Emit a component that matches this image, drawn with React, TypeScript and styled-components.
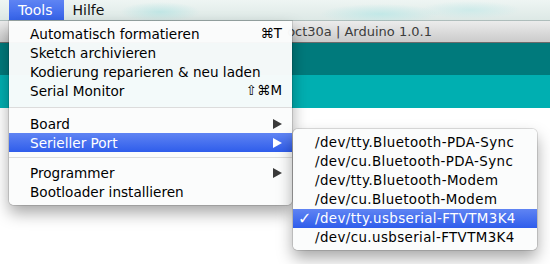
import React from "react";
import styled, { createGlobalStyle } from "styled-components";

const Global = createGlobalStyle`
  html, body { margin: 0; padding: 0; background: #fff; }
  body { font-family: "DejaVu Sans", "Liberation Sans", sans-serif; }
`;

const Screen = styled.div`
  position: relative;
  width: 550px;
  height: 264px;
  overflow: hidden;
  display: flex;
  flex-direction: column;
  background: #fff;
  font-family: "DejaVu Sans", "Liberation Sans", sans-serif;
`;

const MenuBar = styled.div`
  height: 21px;
  flex: none;
  display: flex;
  align-items: stretch;
  padding-left: 9px;
  background:
    radial-gradient(ellipse 40px 10px at 160px 12px, rgba(170, 225, 225, 0.6), transparent),
    radial-gradient(ellipse 60px 10px at 380px 14px, rgba(180, 230, 230, 0.7), transparent),
    radial-gradient(ellipse 50px 9px at 470px 10px, rgba(190, 232, 232, 0.6), transparent),
    linear-gradient(#eef5f3, #dce8e5);
  box-shadow: inset 0 -1px 0 rgba(90, 110, 110, 0.35);
`;

const MenuTitle = styled.div<{ $active?: boolean }>`
  display: flex;
  align-items: center;
  padding: 0 11px 0 9px;
  font-size: 14px;
  color: ${(p) => (p.$active ? "#fff" : "#111")};
  background: ${(p) =>
    p.$active ? "linear-gradient(#5f84f3, #3563ea)" : "transparent"};
  height: 20px;
`;

const Window = styled.div`
  flex: 1;
  display: flex;
  flex-direction: column;
`;

const TitleBar = styled.div`
  height: 21px;
  flex: none;
  display: flex;
  align-items: center;
  justify-content: flex-end;
  padding-right: 118px;
  font-size: 13px;
  color: #3c3c3c;
  background: linear-gradient(#ececec, #cbcbcb);
  border-bottom: 1px solid #6b6b6b;
`;

const Toolbar = styled.div`
  height: 32px;
  flex: none;
  background: #007a7c;
`;

const TabBar = styled.div`
  height: 33px;
  flex: none;
  background: #00afb1;
`;

const Editor = styled.div`
  flex: 1;
  background: #fff;
`;

const Dropdown = styled.div`
  position: absolute;
  left: 9px;
  top: 21px;
  width: 283px;
  padding: 3px 0 4px;
  background: rgba(251, 252, 252, 0.97);
  border-radius: 0 0 5px 5px;
  box-shadow: 0 0 0 1px rgba(0, 0, 0, 0.12), 0 8px 16px rgba(0, 0, 0, 0.35);
  display: flex;
  flex-direction: column;
  z-index: 2;
`;

const SubMenu = styled(Dropdown)`
  left: 293px;
  top: 129px;
  width: 244px;
  padding: 4px 0 3px;
  border-radius: 5px;
  z-index: 3;
`;

const Item = styled.div<{ $active?: boolean }>`
  height: 19px;
  display: flex;
  align-items: center;
  padding: 0 10px 0 21px;
  font-size: 13.6px;
  color: ${(p) => (p.$active ? "#fff" : "#000")};
  background: ${(p) =>
    p.$active ? "linear-gradient(#5f84f3, #2f5deb)" : "transparent"};
  white-space: nowrap;
`;

const SubItem = styled(Item)`
  padding-left: 5px;
  font-size: 13.4px;
  letter-spacing: 0.4px;
`;

const Check = styled.span`
  width: 17px;
  flex: none;
  font-size: 16px;
  letter-spacing: 0;
`;

const Label = styled.span`
  flex: 1;
`;

const Shortcut = styled.span`
  font-size: 13.4px;
`;

const Separator = styled.div<{ $h: number }>`
  height: ${(p) => p.$h}px;
  display: flex;
  align-items: center;
  &::after {
    content: "";
    flex: 1;
    height: 1px;
    background: #dcdcdc;
  }
`;

const Arrow = ({ light }: { light?: boolean }) => (
  <svg width="9" height="10" viewBox="0 0 9 10">
    <polygon points="0,0 9,5 0,10" fill={light ? "#fff" : "#3a3a3a"} />
  </svg>
);

const ports = [
  "/dev/tty.Bluetooth-PDA-Sync",
  "/dev/cu.Bluetooth-PDA-Sync",
  "/dev/tty.Bluetooth-Modem",
  "/dev/cu.Bluetooth-Modem",
  "/dev/tty.usbserial-FTVTM3K4",
  "/dev/cu.usbserial-FTVTM3K4",
];

export default function App() {
  return (
    <>
      <Global />
      <Screen>
        <MenuBar>
          <MenuTitle $active>Tools</MenuTitle>
          <MenuTitle>Hilfe</MenuTitle>
        </MenuBar>
        <Window>
          <TitleBar>oct30a | Arduino 1.0.1</TitleBar>
          <Toolbar />
          <TabBar />
          <Editor />
        </Window>

        <Dropdown>
          <Item>
            <Label>Automatisch formatieren</Label>
            <Shortcut>⌘T</Shortcut>
          </Item>
          <Item>
            <Label>Sketch archivieren</Label>
          </Item>
          <Item>
            <Label>Kodierung reparieren &amp; neu laden</Label>
          </Item>
          <Item>
            <Label>Serial Monitor</Label>
            <Shortcut>⇧⌘M</Shortcut>
          </Item>
          <Separator $h={14} />
          <Item>
            <Label>Board</Label>
            <Arrow />
          </Item>
          <Item $active>
            <Label>Serieller Port</Label>
            <Arrow light />
          </Item>
          <Separator $h={11} />
          <Item>
            <Label>Programmer</Label>
            <Arrow />
          </Item>
          <Item>
            <Label>Bootloader installieren</Label>
          </Item>
        </Dropdown>

        <SubMenu>
          {ports.map((p, i) => (
            <SubItem key={p} $active={i === 4}>
              <Check>{i === 4 ? "✓" : ""}</Check>
              <Label>{p}</Label>
            </SubItem>
          ))}
        </SubMenu>
      </Screen>
    </>
  );
}
